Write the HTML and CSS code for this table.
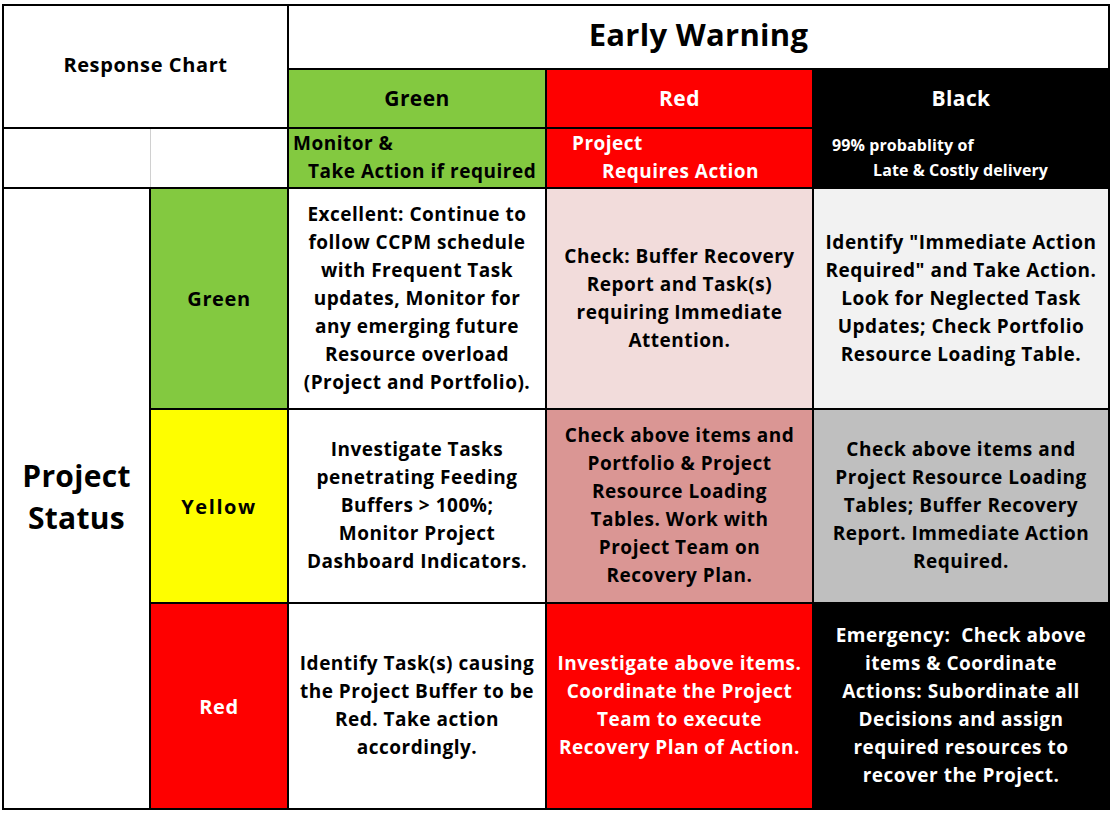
FILE: index.html
```html
<!DOCTYPE html>
<html>
<head>
<meta charset="utf-8">
<link rel="stylesheet" href="styles.css">
</head>
<body>
<div class="chart">
  <div class="cell title-cell">Response Chart</div>
  <div class="cell early">Early Warning</div>
  <div class="cell head green">Green</div>
  <div class="cell head red white">Red</div>
  <div class="cell head black white">Black</div>

  <div class="cell blank-pair"><span class="divider"></span></div>
  <div class="cell sub green sub-left"><span>Monitor &amp;</span><span class="indent1">Take Action if required</span></div>
  <div class="cell sub red white sub-left sub-red"><span>Project</span><span class="indent2">Requires Action</span></div>
  <div class="cell sub black white sub-left sub-black"><span>99% probablity of</span><span class="indent3">Late &amp; Costly delivery</span></div>

  <div class="cell project-status">Project<br>Status</div>
  <div class="cell label green">Green</div>
  <div class="cell body">Excellent: Continue to<br>follow CCPM schedule<br>with Frequent Task<br>updates, Monitor for<br>any emerging future<br>Resource overload<br>(Project and Portfolio).</div>
  <div class="cell body pink-light">Check: Buffer Recovery<br>Report and Task(s)<br>requiring Immediate<br>Attention.</div>
  <div class="cell body grey-light">Identify "Immediate Action<br>Required" and Take Action.<br>Look for Neglected Task<br>Updates; Check Portfolio<br>Resource Loading Table.</div>

  <div class="cell label yellow label-wide">Yellow</div>
  <div class="cell body">Investigate Tasks<br>penetrating Feeding<br>Buffers &gt; 100%;<br>Monitor Project<br>Dashboard Indicators.</div>
  <div class="cell body pink-mid">Check above items and<br>Portfolio &amp; Project<br>Resource Loading<br>Tables. Work with<br>Project Team on<br>Recovery Plan.</div>
  <div class="cell body grey-mid">Check above items and<br>Project Resource Loading<br>Tables; Buffer Recovery<br>Report. Immediate Action<br>Required.</div>

  <div class="cell label red white">Red</div>
  <div class="cell body">Identify Task(s) causing<br>the Project Buffer to be<br>Red. Take action<br>accordingly.</div>
  <div class="cell body red white">Investigate above items.<br>Coordinate the Project<br>Team to execute<br>Recovery Plan of Action.</div>
  <div class="cell body black white">Emergency:&nbsp; Check above<br>items &amp; Coordinate<br>Actions: Subordinate all<br>Decisions and assign<br>required resources to<br>recover the Project.</div>
</div>
</body>
</html>
```

FILE: styles.css
```css
html, body {
  margin: 0;
  padding: 0;
  background: #ffffff;
}

body {
  font-family: "Open Sans", "Lato", "DejaVu Sans", sans-serif;
  font-weight: 700;
  color: #000000;
}

.chart {
  margin: 4px 0 0 2px;
  width: 1104px;
  display: grid;
  grid-template-columns: 145px 136px 256px 265px 294px;
  grid-template-rows: 62px 57px 58px 219px 192px 204px;
  gap: 2px;
  padding: 2px;
  background: #000000;
}

.cell {
  background: #ffffff;
  display: flex;
  align-items: center;
  justify-content: center;
  text-align: center;
  white-space: nowrap;
  overflow: hidden;
}

.title-cell {
  grid-column: 1 / 3;
  grid-row: 1 / 3;
  font-size: 20px;
  letter-spacing: 0.6px;
  padding-bottom: 4px;
}

.early {
  grid-column: 3 / 6;
  grid-row: 1;
  font-size: 31px;
  letter-spacing: 0.3px;
  padding-bottom: 6px;
}

.head {
  font-size: 21px;
  letter-spacing: 0.4px;
  padding-bottom: 2px;
}

.blank-pair {
  grid-column: 1 / 3;
  grid-row: 3;
  position: relative;
}

.divider {
  position: absolute;
  left: 146px;
  top: 0;
  bottom: 0;
  width: 1px;
  background: #d0d0d0;
}

.sub {
  font-size: 19px;
  line-height: 28px;
  letter-spacing: 0.5px;
}

.sub-left {
  flex-direction: column;
  align-items: flex-start;
  justify-content: center;
  text-align: left;
  padding-left: 4px;
  padding-bottom: 2px;
}

.indent1 { padding-left: 15px; }

.sub-red { padding-left: 25px; }
.indent2 { padding-left: 30px; }

.sub-black {
  padding-left: 18px;
  font-size: 16px;
  line-height: 25px;
  letter-spacing: 0.1px;
  padding-top: 2px;
}
.indent3 { padding-left: 41px; }

.project-status {
  grid-column: 1;
  grid-row: 4 / 7;
  font-size: 30px;
  line-height: 42px;
  letter-spacing: 0.3px;
  padding-bottom: 4px;
}

.label {
  font-size: 20px;
  letter-spacing: 0.6px;
}

.label-wide {
  letter-spacing: 1.6px;
}

.body {
  font-size: 19px;
  line-height: 28px;
  letter-spacing: 0.5px;
  padding-bottom: 2px;
}

.green { background: #83c940; }
.red { background: #fe0000; }
.black { background: #000000; }
.yellow { background: #fefe00; }
.white { color: #ffffff; }

.pink-light { background: #f2dcdb; }
.pink-mid { background: #da9694; }
.grey-light { background: #f2f2f2; }
.grey-mid { background: #bfbfbf; }
```
